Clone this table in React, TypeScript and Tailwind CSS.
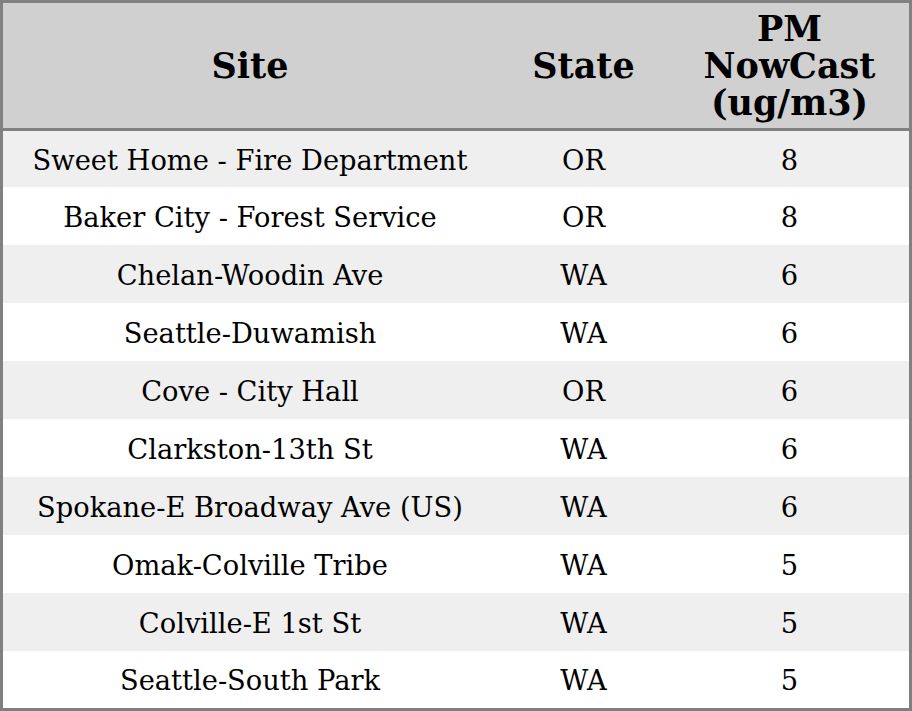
const rows: [string, string, string][] = [
  ["Sweet Home - Fire Department", "OR", "8"],
  ["Baker City - Forest Service", "OR", "8"],
  ["Chelan-Woodin Ave", "WA", "6"],
  ["Seattle-Duwamish", "WA", "6"],
  ["Cove - City Hall", "OR", "6"],
  ["Clarkston-13th St", "WA", "6"],
  ["Spokane-E Broadway Ave (US)", "WA", "6"],
  ["Omak-Colville Tribe", "WA", "5"],
  ["Colville-E 1st St", "WA", "5"],
  ["Seattle-South Park", "WA", "5"],
]

export default function App() {
  return (
    <div className="w-[912px] h-[711px] overflow-hidden bg-white font-['DejaVu_Serif',serif] text-black">
      <table className="w-[912px] table-fixed border-separate border-spacing-0 border-[3px] border-[#808080] text-center">
        <thead>
          <tr className="bg-[#d0d0d0] text-[35px] font-bold leading-[37px]">
            <th className="w-[494px] h-[128px] p-0 border-b-[3px] border-[#808080]">Site</th>
            <th className="w-[173px] h-[128px] p-0 border-b-[3px] border-[#808080]">State</th>
            <th className="h-[128px] p-0 border-b-[3px] border-[#808080]">
              PM
              <br />
              NowCast
              <br />
              (ug/m3)
            </th>
          </tr>
        </thead>
        <tbody className="text-[27.3px]">
          {rows.map(([site, state, pm], i) => {
            const h = i === 0 ? "h-[56px]" : i === 9 ? "h-[57px]" : "h-[58px]"
            return (
              <tr key={site} className={i % 2 === 0 ? "bg-[#efefef]" : "bg-white"}>
                <td className={`${h} p-0 pt-[4px]`}>{site}</td>
                <td className={`${h} p-0 pt-[4px]`}>{state}</td>
                <td className={`${h} p-0 pt-[4px]`}>{pm}</td>
              </tr>
            )
          })}
        </tbody>
      </table>
    </div>
  )
}
